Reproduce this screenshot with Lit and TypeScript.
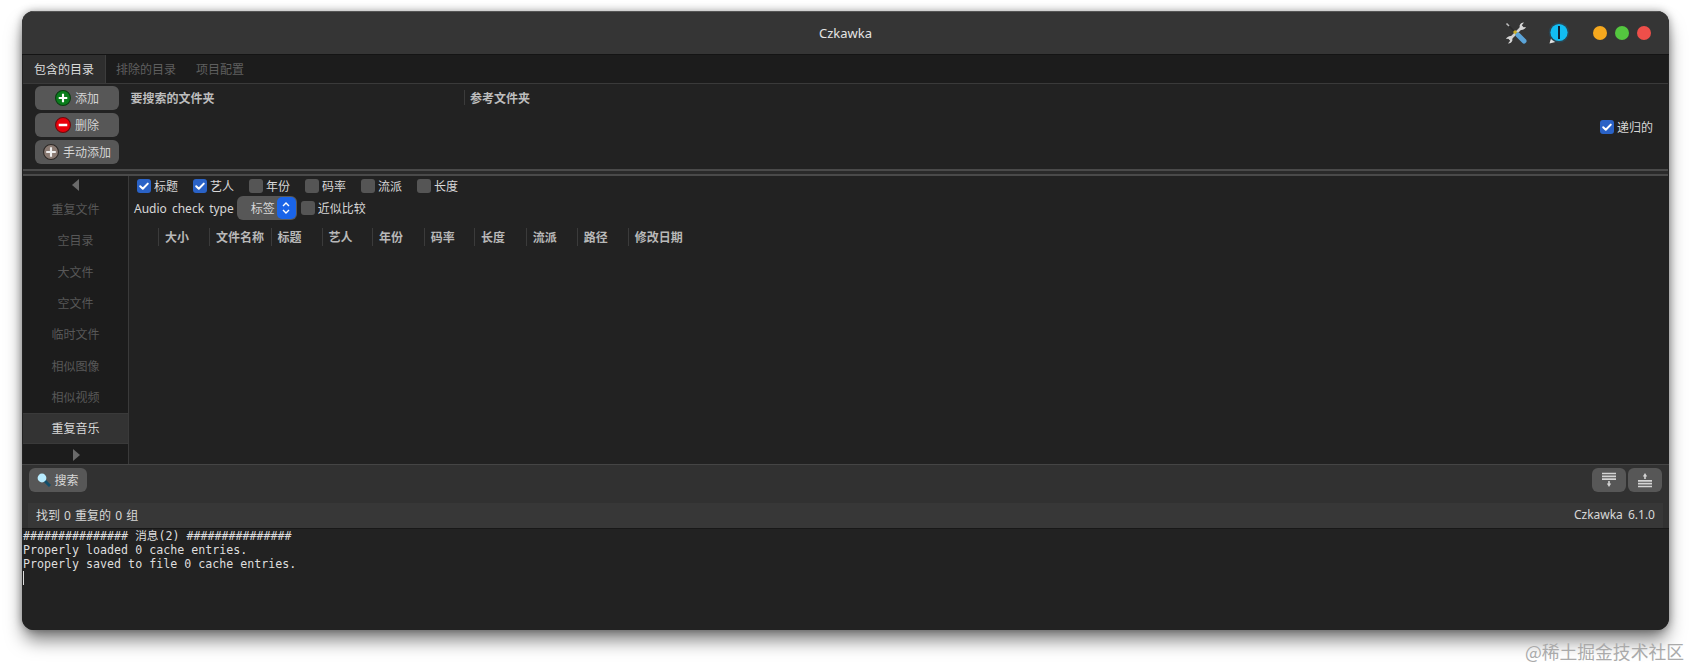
import { LitElement, html, css, svg } from "lit";
import { customElement } from "lit/decorators.js";

const check = svg`<svg class="tick" viewBox="0 0 14 14"><path d="M3.2 7.2l2.6 2.6 5-5.2" fill="none" stroke="#fff" stroke-width="2" stroke-linecap="round" stroke-linejoin="round"/></svg>`;

@customElement("app-root")
export class AppRoot extends LitElement {
  static styles = css`
    :host { display: block; width: 1691px; height: 668px; background: #fff; overflow: hidden; font-family: "Noto Sans", "Noto Sans CJK SC", sans-serif; font-size: 12px; color: #d8d8d8; }
    * { box-sizing: border-box; }
    .page { padding: 11px 22px 0 22px; display: flex; flex-direction: column; height: 668px; }
    .win { height: 619px; border-radius: 12px; background: #222; display: flex; flex-direction: column; overflow: hidden; flex: none; }
    .shadow { box-shadow: 0 12px 18px -2px rgba(0,0,0,.5), 0 0 8px rgba(0,0,0,.35); }
    .title { height: 44px; flex: none; background: #353535; border-top: 1px solid #555; border-bottom: 1px solid #141414; display: flex; align-items: center; position: relative; padding-right: 18px; justify-content: flex-end; }
    .title .name { position: absolute; left: 0; right: 0; text-align: center; font-size: 13px; color: #e4e4e4; }
    .tools { width: 22px; height: 22px; margin-right: 21px; }
    .info { width: 22px; height: 22px; margin-right: 23px; }
    .dots { display: flex; gap: 8px; }
    .dot { width: 14px; height: 14px; border-radius: 50%; }
    .y { background: #f5a81e; } .g { background: #54c73f; } .r { background: #ee4f4a; }
    .tabs { height: 29px; flex: none; background: #1c1c1c; display: flex; border-bottom: 1px solid #3a3a3a; margin: 0 1px; }
    .tab { padding: 0 10px; display: flex; align-items: center; color: #5f5f5f; white-space: nowrap; }
    .tab.on { background: #2e2e2e; color: #dcdcdc; border-right: 1px solid #3c3c3c; padding: 0 11px 0 11px; width: 83px; }
    .dirs { height: 85px; flex: none; display: flex; padding: 2px 13px 0 13px; position: relative; background: #222; }
    .btns { width: 84px; display: flex; flex-direction: column; gap: 3px; flex: none; }
    .btn { height: 24px; background: #575757; border-radius: 6px; display: flex; align-items: center; justify-content: center; gap: 4px; color: #d4d4d4; padding-bottom: 1px; }
    .btn svg { width: 16px; height: 16px; flex: none; }
    .cols { display: flex; height: 23px; align-items: center; font-weight: 700; color: #bdbdbd; margin-left: 11.5px; flex: 1; }
    .cols .a { width: 333.5px; }
    .cols .b { border-left: 1px solid #3b3b3b; padding-left: 5px; height: 15px; display: flex; align-items: center; }
    .rec { position: absolute; right: 16px; top: 34px; display: flex; align-items: center; gap: 3px; }
    .box { width: 14px; height: 14px; border-radius: 3px; background: #555; flex: none; display: block; }
    .box.on { background: #2a62c6; }
    .tick { width: 14px; height: 14px; display: block; }
    .handle { height: 7px; flex: none; background: #2a2a2a; border-top: 2px solid #4a4a4a; border-bottom: 2px solid #4a4a4a; margin: 0 1px; }
    .mid { flex: none; height: 288px; display: flex; margin: 0 1px; }
    .side { width: 106px; flex: none; background: #1c1c1c; border-right: 1px solid #3a3a3a; display: flex; flex-direction: column; align-items: stretch; color: #585858; text-align: center; }
    .arrow { height: 17.5px; flex: none; display: flex; align-items: center; justify-content: center; }
    .arrow svg { width: 8px; height: 12px; }
    .item { height: 31.3px; flex: none; display: flex; align-items: center; justify-content: center; }
    .item.on { background: #333; color: #d8d8d8; border-top: 1px solid #3a3a3a; border-bottom: 1px solid #3a3a3a; }
    .side .arrow:last-child { flex: 1; padding-top: 3px; }
    .main { flex: 1; padding: 2px 0 0 8px; min-width: 0; }
    .checks { display: flex; height: 15px; align-items: center; }
    .ck { display: flex; align-items: center; gap: 3px; width: 56px; flex: none; }
    .row2 { display: flex; align-items: center; height: 24px; margin-top: 3px; margin-left: -3px; }
    .lbl { word-spacing: 2px; white-space: nowrap; }
    .sel { margin-left: 3px; width: 60px; height: 24px; background: #575757; border-radius: 6px; display: flex; align-items: center; justify-content: flex-end; padding-right: 1px; gap: 2px; margin-right: 4px; }
    .updn { width: 19px; height: 22px; background: #1a64e8; border-radius: 5px; display: flex; align-items: center; justify-content: center; }
    .updn svg { width: 10px; height: 14px; }
    .near { display: flex; align-items: center; gap: 3px; }
    .hdr { display: grid; grid-template-columns: 51px 61.5px 51px 50.5px 51.7px 50.3px 51.7px 51px 51px 70px; margin: 7.5px 0 0 21px; height: 16px; font-weight: 700; color: #b8b8b8; }
    .hdr div { border-left: 1px solid #3b3b3b; padding-left: 6px; display: flex; align-items: center; white-space: nowrap; }
    .bar { height: 39px; flex: none; background: #313131; border-top: 1px solid #454545; padding: 3px 7px 0 7px; display: flex; justify-content: space-between; align-items: flex-start; }
    .search { width: 58px; height: 24px; background: #575757; border-radius: 6px; display: flex; align-items: center; justify-content: center; gap: 3px; }
    .search svg { width: 14px; height: 14px; }
    .save { display: flex; gap: 2px; }
    .ib { width: 34px; height: 24px; background: #575757; border-radius: 6px; display: flex; align-items: center; justify-content: center; }
    .ib svg { width: 16px; height: 16px; }
    .status { height: 26px; flex: none; background: #313131; border-bottom: 1px solid #181818; padding: 0 6px; display: flex; }
    .inner { flex: 1; background: #373737; display: flex; align-items: center; justify-content: space-between; padding: 0 8px 2px 8px; word-spacing: 1px; }
    .ver { word-spacing: 2px; }
    .log { flex: 1; background: #222; padding: 0 1px; font-family: "DejaVu Sans Mono", "Noto Sans CJK SC", monospace; font-size: 11.65px; line-height: 14px; color: #dedede; white-space: pre; }
    .cur { width: 1px; height: 14px; background: #ddd; }
    .mark { margin: 10px -15px 0 0; text-align: right; font-size: 17.8px; line-height: 22px; color: #aaa; font-family: "Noto Sans CJK SC", sans-serif; }
  `;

  ck(label: string, on = false) {
    return html`<span class="ck"><span class="box ${on ? "on" : ""}">${on ? check : ""}</span>${label}</span>`;
  }

  render() {
    const items = ["重复文件", "空目录", "大文件", "空文件", "临时文件", "相似图像", "相似视频"];
    const cols = ["大小", "文件名称", "标题", "艺人", "年份", "码率", "长度", "流派", "路径", "修改日期"];
    return html`<div class="page">
      <div class="win shadow">
        <div class="title">
          <span class="name">Czkawka</span>
          <svg class="tools" viewBox="0 0 22 22">
            <path d="M16.5 5.5L4.5 17.5" stroke="#cfcfcf" stroke-width="2.6"/>
            <path d="M21 5a4.5 4.5 0 0 1-6.2 2.4L14.6 3.6A4.5 4.5 0 0 1 19 .6L16.8 3.2l1.8 2z" fill="#d5d5d5"/>
            <path d="M1 17a4.5 4.5 0 0 1 6.2-2.4l.2 3.8A4.5 4.5 0 0 1 3 21.4l2.2-2.6-1.8-2z" fill="#d5d5d5"/>
            <path d="M2.5 2.5l7 7" stroke="#2a2a2a" stroke-width="1.6"/>
            <path d="M1.5 1.5l2.5 2.5" stroke="#bdbdbd" stroke-width="1.6"/>
            <path d="M9 9l3 3" stroke="#c9ae2b" stroke-width="3"/>
            <path d="M13 13l6 6" stroke="#5ba4d8" stroke-width="5" stroke-linecap="round"/>
          </svg>
          <svg class="info" viewBox="0 0 22 22">
            <path d="M1.5 21.5l2-7 6 5z" fill="#e0e0e0"/>
            <circle cx="11" cy="10.5" r="10.2" fill="#2b4552"/>
            <circle cx="11" cy="10.5" r="8.6" fill="#12bdf3"/>
            <rect x="10" y="4" width="2" height="13" fill="#123"/>
          </svg>
          <div class="dots"><span class="dot y"></span><span class="dot g"></span><span class="dot r"></span></div>
        </div>
        <div class="tabs">
          <div class="tab on">包含的目录</div><div class="tab">排除的目录</div><div class="tab">项目配置</div>
        </div>
        <div class="dirs">
          <div class="btns">
            <div class="btn"><svg viewBox="0 0 15 15"><circle cx="7.5" cy="7.5" r="7" fill="#0a7d1c" stroke="#0b3d12"/><path d="M7.5 3.5v8M3.5 7.5h8" stroke="#fff" stroke-width="2"/></svg>添加</div>
            <div class="btn"><svg viewBox="0 0 15 15"><circle cx="7.5" cy="7.5" r="7" fill="#e8000b" stroke="#6d0a0d"/><path d="M3.5 7.5h8" stroke="#fff" stroke-width="2.4"/></svg>删除</div>
            <div class="btn"><svg viewBox="0 0 15 15"><circle cx="7.5" cy="7.5" r="7" fill="#8a7a72" stroke="#2d2926"/><path d="M7.5 3v9M3 7.5h9" stroke="#eee" stroke-width="2"/></svg>手动添加</div>
          </div>
          <div class="cols"><span class="a">要搜索的文件夹</span><span class="b">参考文件夹</span></div>
          <div class="rec"><span class="box on">${check}</span>递归的</div>
        </div>
        <div class="handle"></div>
        <div class="mid">
          <div class="side">
            <div class="arrow"><svg viewBox="0 0 8 12"><path d="M7 0v12L0 6z" fill="#6a6a6a"/></svg></div>
            ${items.map((i) => html`<div class="item">${i}</div>`)}
            <div class="item on">重复音乐</div>
            <div class="arrow"><svg viewBox="0 0 8 12"><path d="M1 0v12l7-6z" fill="#6a6a6a"/></svg></div>
          </div>
          <div class="main">
            <div class="checks">
              ${this.ck("标题", true)}${this.ck("艺人", true)}${this.ck("年份")}${this.ck("码率")}${this.ck("流派")}${this.ck("长度")}
            </div>
            <div class="row2"><span class="lbl">Audio check type</span>
              <div class="sel">标签<span class="updn"><svg viewBox="0 0 10 14"><path d="M2 5l3-3 3 3M2 9l3 3 3-3" fill="none" stroke="#fff" stroke-width="1.4"/></svg></span></div>
              <span class="near"><span class="box"></span>近似比较</span>
            </div>
            <div class="hdr">${cols.map((c) => html`<div>${c}</div>`)}</div>
          </div>
        </div>
        <div class="bar">
          <div class="search"><svg viewBox="0 0 14 14"><path d="M7.5 7.5l5.5 5.5" stroke="#124f6b" stroke-width="3"/><circle cx="5" cy="5" r="4.4" fill="#b8ecff"/></svg>搜索</div>
          <div class="save">
            <div class="ib"><svg viewBox="0 0 16 16"><path d="M1 1.5h14M1 4.3h14M1 7.1h14" stroke="#d4d4d4" stroke-width="1.7"/><path d="M8 9v3" stroke="#d4d4d4" stroke-width="1.6"/><path d="M5.8 11.5h4.4L8 15z" fill="#d4d4d4"/></svg></div>
            <div class="ib"><svg viewBox="0 0 16 16"><path d="M8 4v3" stroke="#d4d4d4" stroke-width="1.6"/><path d="M5.8 4.5h4.4L8 1z" fill="#d4d4d4"/><path d="M1 8.9h14M1 11.7h14M1 14.5h14" stroke="#d4d4d4" stroke-width="1.7"/></svg></div>
          </div>
        </div>
        <div class="status"><div class="inner"><span>找到 0 重复的 0 组</span><span class="ver">Czkawka 6.1.0</span></div></div>
        <div class="log">############### 消息(2) ###############
Properly loaded 0 cache entries.
Properly saved to file 0 cache entries.
<div class="cur"></div></div>
      </div>
      <div class="mark">@稀土掘金技术社区</div>
    </div>`;
  }
}
